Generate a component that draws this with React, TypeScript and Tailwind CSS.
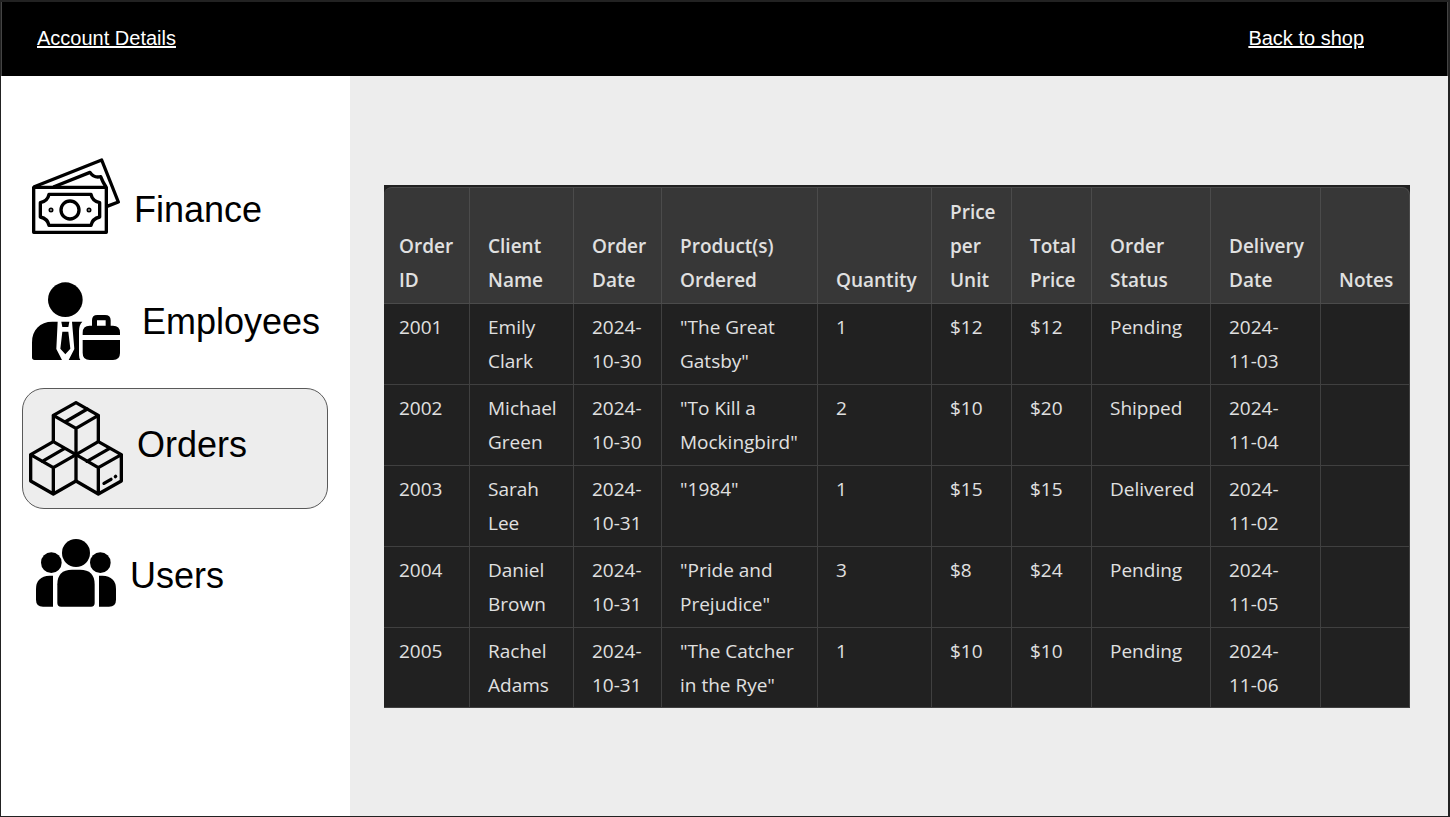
import type { ReactNode } from "react";

const orders = [
  ["2001", "Emily Clark", "2024-10-30", '"The Great Gatsby"', "1", "$12", "$12", "Pending", "2024-11-03", ""],
  ["2002", "Michael Green", "2024-10-30", '"To Kill a Mockingbird"', "2", "$10", "$20", "Shipped", "2024-11-04", ""],
  ["2003", "Sarah Lee", "2024-10-31", '"1984"', "1", "$15", "$15", "Delivered", "2024-11-02", ""],
  ["2004", "Daniel Brown", "2024-10-31", '"Pride and Prejudice"', "3", "$8", "$24", "Pending", "2024-11-05", ""],
  ["2005", "Rachel Adams", "2024-10-31", '"The Catcher in the Rye"', "1", "$10", "$10", "Pending", "2024-11-06", ""],
];

const columns = [
  { label: "Order ID", width: "w-[86px]" },
  { label: "Client Name", width: "w-[104px]" },
  { label: "Order Date", width: "w-[88px]" },
  { label: "Product(s) Ordered", width: "w-[156px]" },
  { label: "Quantity", width: "w-[114px]" },
  { label: "Price per Unit", width: "w-[80px]" },
  { label: "Total Price", width: "w-[80px]" },
  { label: "Order Status", width: "w-[119px]" },
  { label: "Delivery Date", width: "w-[110px]" },
  { label: "Notes", width: "w-[89px]" },
];

function FinanceIcon() {
  return (
    <svg viewBox="36 24 264 228" className="h-[76px] w-[88px] shrink-0" fill="none" stroke="black" strokeWidth="10" strokeLinejoin="round" aria-hidden="true">
      <path d="M41 112H259V247H41Z" />
      <path d="M41 111 L245 30 L295 156 L261 169" />
      <path d="M100 111 L210 67 Q222 85 242 80 Q248 96 258 111" />
      <path d="M87 133H213Q217 153 239 158V201Q217 206 213 226H87Q83 206 61 201V158Q83 153 87 133Z" />
      <circle cx="150" cy="180" r="27" />
      <circle cx="93" cy="180" r="5" strokeWidth="5" />
      <circle cx="207" cy="180" r="5" strokeWidth="5" />
    </svg>
  );
}

function EmployeesIcon() {
  return (
    <svg viewBox="36 34 264 237" className="h-[79px] w-[88px] shrink-0" aria-hidden="true">
      <circle cx="136" cy="87" r="52" />
      <path d="M36 260V216C36 177 60 153 97 153H113L109 235L126 268H44Q36 268 36 260Z" />
      <path d="M156 153H187Q177 163 177 181V253Q177 262 181 268H146L163 235Z" />
      <path d="M124 153H148L145 169H127ZM127 183H145L151 234L136 251L121 234Z" />
      <path d="M188 193V186Q188 165 209 165H216V149Q216 133 232 133H255Q272 133 272 149V165H279Q300 165 300 186V193ZM231 165H257V149H231Z" fillRule="evenodd" />
      <path d="M188 208H300V247Q300 268 279 268H209Q188 268 188 247Z" />
    </svg>
  );
}

function OrdersIcon() {
  return (
    <svg viewBox="42 64 282 285" className="h-[95px] w-[94px] shrink-0" fill="none" stroke="black" strokeWidth="10" strokeLinejoin="round" strokeLinecap="round" aria-hidden="true">
      <path d="M183 69 L250 107 L183 146 L115 107Z M115 107V185 M250 107V185 M183 146V303 M150 127 L217 88" />
      <path d="M115 186 L183 225 L115 264 L47 225Z M47 225V304L115 343L183 304 M115 264V343 M82 245 L149 206" />
      <path d="M250 186 L319 225 L250 264 L183 225Z M319 225V304L250 343L183 304 M250 264V343 M216 245 L284 206" />
      <path d="M267 311 L288 299 M301 291 L302 290" />
    </svg>
  );
}

function UsersIcon() {
  return (
    <svg viewBox="33 26 240 204" className="h-[68px] w-[80px] shrink-0" aria-hidden="true">
      <circle cx="153" cy="68" r="42" />
      <circle cx="79" cy="97" r="31" />
      <circle cx="226" cy="97" r="31" />
      <path d="M97 218V162Q97 118 141 118H165Q209 118 209 162V218Q209 229 198 229H108Q97 229 97 218Z" />
      <path d="M84 136H74Q33 138 33 176V208Q33 229 54 229H84ZM222 136H232Q273 138 273 176V208Q273 229 252 229H222Z" />
    </svg>
  );
}

type NavItemProps = { icon: ReactNode; label: string; className: string; labelClassName?: string };

function NavItem({ icon, label, className, labelClassName }: NavItemProps) {
  return (
    <a href="#" className={`flex text-4xl leading-10 text-black ${className}`}>
      {icon}
      <span className={labelClassName}>{label}</span>
    </a>
  );
}

export default function App() {
  return (
    <div className="flex min-h-screen flex-col border-t-2 border-r-2 border-b border-l border-[#222222] bg-[#ededed] font-['Liberation_Sans',Arial,sans-serif]">
      <header className="flex h-[74px] items-center justify-between border-x border-[#444444] bg-black pr-[83px] pb-[3px] pl-[35px] text-xl text-white">
        <a href="#" className="underline">Account Details</a>
        <a href="#" className="underline">Back to shop</a>
      </header>
      <div className="flex flex-1">
        <nav className="flex w-[349px] shrink-0 flex-col bg-white pt-[82px] pr-[22px] pl-[21px]">
          <NavItem
            icon={<FinanceIcon />}
            label="Finance"
            className="items-end gap-[14px] pb-12 pl-[10px]"
            labelClassName="pb-1"
          />
          <NavItem icon={<EmployeesIcon />} label="Employees" className="items-center gap-[22px] pb-[27px] pl-[10px]" />
          <NavItem
            icon={<OrdersIcon />}
            label="Orders"
            className="h-[121px] items-center gap-[14px] rounded-[22px] border border-[#595959] bg-[#ededed] pl-[6px]"
            labelClassName="pb-2"
          />
          <NavItem
            icon={<UsersIcon />}
            label="Users"
            className="items-center gap-[14px] pt-[30px] pl-[14px]"
            labelClassName="pt-1.5"
          />
        </nav>
        <main className="min-w-0 flex-1 pt-[109px] pr-[38px] pb-16 pl-[34px]">
          <div className="bg-[#212121] pt-[2px]">
            <table className="w-full table-fixed border-separate border-spacing-0 text-left font-['Open_Sans','Noto_Sans',sans-serif] text-[19px] leading-[34px] text-[#e0e0e0]">
              <thead>
                <tr>
                  {columns.map((column) => (
                    <th
                      key={column.label}
                      scope="col"
                      className={`${column.width} border-t border-r border-b border-[#4b4b4b] bg-[#373737] pt-[7px] pr-[14px] pb-[6px] pl-[18px] align-bottom font-semibold first:rounded-tl-lg first:pl-[15px] last:rounded-tr-lg`}
                    >
                      {column.label}
                    </th>
                  ))}
                </tr>
              </thead>
              <tbody className="[&>tr:last-child>td]:pb-[5px]">
                {orders.map((order) => (
                  <tr key={order[0]}>
                    {order.map((value, index) => (
                      <td key={index} className="border-r border-b border-[#404040] pt-[6px] pr-4 pb-[6px] pl-[18px] align-top first:pl-[15px]">
                        {value}
                      </td>
                    ))}
                  </tr>
                ))}
              </tbody>
            </table>
          </div>
        </main>
      </div>
    </div>
  );
}
